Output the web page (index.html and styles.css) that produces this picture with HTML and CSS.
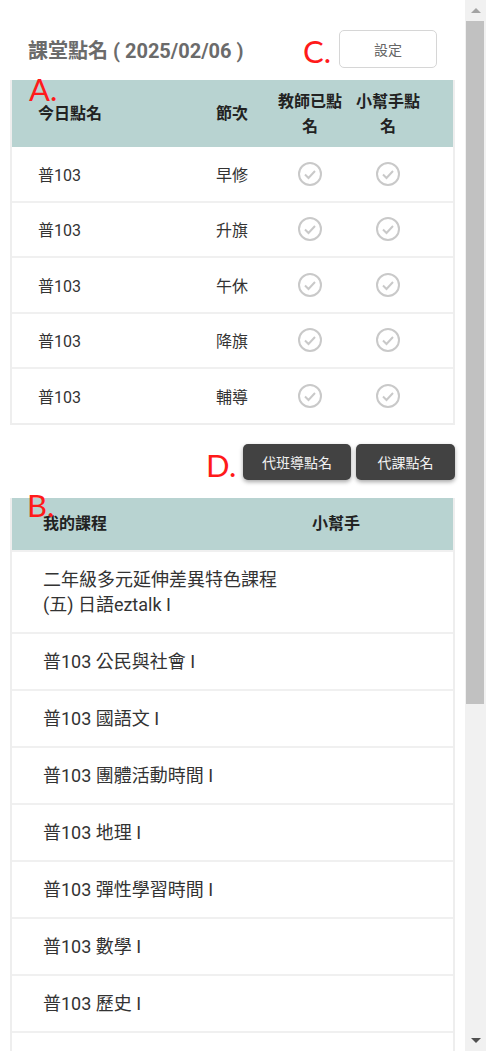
FILE: index.html
```html
<!DOCTYPE html>
<html lang="zh-Hant">
<head>
    <meta charset="UTF-8">
    <meta name="viewport" content="width=device-width, initial-scale=1.0">
    <title>課堂點名</title>
    <link rel="stylesheet" href="styles.css">
</head>
<body>

    <div class="page">
        <div class="top-bar">
            <h1 class="title">課堂點名 ( 2025/02/06 )</h1>
            <button class="setting-button">設定</button>
            <span class="mark mark-c">C.</span>
        </div>

        <div class="roll-table">
            <span class="mark mark-a">A.</span>
            <div class="roll-row roll-head">
                <div>今日點名</div>
                <div>節次</div>
                <div class="center">教師已點名</div>
                <div class="center">小幫手點名</div>
            </div>
            <div class="roll-row">
                <div>普103</div>
                <div>早修</div>
                <div class="center"><svg class="check" viewBox="0 0 24 24"><circle cx="12" cy="12" r="11"/><polyline points="7,12.5 10.5,16 17,9"/></svg></div>
                <div class="center"><svg class="check" viewBox="0 0 24 24"><circle cx="12" cy="12" r="11"/><polyline points="7,12.5 10.5,16 17,9"/></svg></div>
            </div>
            <div class="roll-row">
                <div>普103</div>
                <div>升旗</div>
                <div class="center"><svg class="check" viewBox="0 0 24 24"><circle cx="12" cy="12" r="11"/><polyline points="7,12.5 10.5,16 17,9"/></svg></div>
                <div class="center"><svg class="check" viewBox="0 0 24 24"><circle cx="12" cy="12" r="11"/><polyline points="7,12.5 10.5,16 17,9"/></svg></div>
            </div>
            <div class="roll-row">
                <div>普103</div>
                <div>午休</div>
                <div class="center"><svg class="check" viewBox="0 0 24 24"><circle cx="12" cy="12" r="11"/><polyline points="7,12.5 10.5,16 17,9"/></svg></div>
                <div class="center"><svg class="check" viewBox="0 0 24 24"><circle cx="12" cy="12" r="11"/><polyline points="7,12.5 10.5,16 17,9"/></svg></div>
            </div>
            <div class="roll-row">
                <div>普103</div>
                <div>降旗</div>
                <div class="center"><svg class="check" viewBox="0 0 24 24"><circle cx="12" cy="12" r="11"/><polyline points="7,12.5 10.5,16 17,9"/></svg></div>
                <div class="center"><svg class="check" viewBox="0 0 24 24"><circle cx="12" cy="12" r="11"/><polyline points="7,12.5 10.5,16 17,9"/></svg></div>
            </div>
            <div class="roll-row">
                <div>普103</div>
                <div>輔導</div>
                <div class="center"><svg class="check" viewBox="0 0 24 24"><circle cx="12" cy="12" r="11"/><polyline points="7,12.5 10.5,16 17,9"/></svg></div>
                <div class="center"><svg class="check" viewBox="0 0 24 24"><circle cx="12" cy="12" r="11"/><polyline points="7,12.5 10.5,16 17,9"/></svg></div>
            </div>
        </div>

        <div class="action-bar">
            <span class="mark mark-d">D.</span>
            <button class="dark-button">代班導點名</button>
            <button class="dark-button">代課點名</button>
        </div>

        <div class="course-table">
            <span class="mark mark-b">B.</span>
            <div class="course-row course-head">
                <div>我的課程</div>
                <div>小幫手</div>
            </div>
            <div class="course-row"><div>二年級多元延伸差異特色課程<br>(五) 日語eztalk I</div><div></div></div>
            <div class="course-row"><div>普103 公民與社會 I</div><div></div></div>
            <div class="course-row"><div>普103 國語文 I</div><div></div></div>
            <div class="course-row"><div>普103 團體活動時間 I</div><div></div></div>
            <div class="course-row"><div>普103 地理 I</div><div></div></div>
            <div class="course-row"><div>普103 彈性學習時間 I</div><div></div></div>
            <div class="course-row"><div>普103 數學 I</div><div></div></div>
            <div class="course-row"><div>普103 歷史 I</div><div></div></div>
            <div class="course-row"><div>普103 英語文 I</div><div></div></div>
            <div class="course-row"><div>普103 生物 I</div><div></div></div>
            <div class="course-row"><div>普103 化學 I</div><div></div></div>
            <div class="course-row"><div>普103 物理 I</div><div></div></div>
            <div class="course-row"><div>普103 體育 I</div><div></div></div>
            <div class="course-row"><div>普103 音樂 I</div><div></div></div>
            <div class="course-row"><div>普103 美術 I</div><div></div></div>
            <div class="course-row"><div>普103 健康與護理 I</div><div></div></div>
        </div>
    </div>

    <div class="scrollbar" aria-hidden="true">
        <div class="scroll-arrow arrow-up"></div>
        <div class="scroll-track"><div class="scroll-thumb"></div></div>
        <div class="scroll-arrow arrow-down"></div>
    </div>

</body>
</html>
```

FILE: styles.css
```css
body {
    margin: 0;
    padding-right: 21px;
    font-family: Roboto, "Noto Sans CJK TC", sans-serif;
    color: #333;
    background-color: white;
}

.page {
    padding: 30px 10px 20px;
}

.top-bar {
    position: relative;
    display: flex;
    justify-content: space-between;
    align-items: center;
    padding: 0 18px;
}

.title {
    margin: 0;
    font-size: 20px;
    font-weight: bold;
    color: #6b6b6b;
}

.setting-button {
    width: 98px;
    height: 38px;
    background: white;
    border: 1px solid #d6d6d6;
    border-radius: 5px;
    font-family: inherit;
    font-size: 14px;
    color: #666;
}

.mark {
    position: absolute;
    font-family: Lato, "Liberation Sans", sans-serif;
    font-size: 31px;
    line-height: 1;
    color: #ff1a1a;
}

.mark-c {
    left: 293px;
    top: 6px;
}

.mark-a {
    left: 17px;
    top: -6px;
}

.mark-d {
    left: 196px;
    top: 6px;
}

.mark-b {
    left: 15px;
    top: -8px;
}

.roll-table {
    position: relative;
    margin-top: 12px;
    border: 2px solid #eee;
    border-top: none;
}

.roll-row {
    display: grid;
    grid-template-columns: 1fr 55px 78px 78px;
    align-items: center;
    height: 53.5px;
    padding: 0 26px;
    border-bottom: 2px solid #f0f0f0;
    font-size: 16px;
}

.roll-row:last-child {
    border-bottom: none;
}

.roll-head {
    height: 67px;
    border-bottom: none;
    background-color: #b8d3d1;
    font-weight: bold;
    color: #222;
    line-height: 25px;
}

.center {
    text-align: center;
}

.check {
    display: block;
    width: 24px;
    height: 24px;
    margin: 0 auto;
    fill: none;
    stroke: #c9c9c9;
    stroke-width: 2;
    overflow: visible;
}

.action-bar {
    position: relative;
    display: flex;
    justify-content: flex-end;
    gap: 5px;
    margin: 19px 0 18px;
}

.dark-button {
    min-width: 99px;
    height: 36px;
    padding: 0 19px;
    background-color: #424242;
    color: #f2f2f2;
    border: none;
    border-radius: 5px;
    box-shadow: 0 2px 4px rgba(0, 0, 0, 0.35);
    font-family: inherit;
    font-size: 14px;
}

.course-table {
    position: relative;
    border: 2px solid #eee;
    border-top: none;
}

.course-row {
    display: grid;
    grid-template-columns: 269px 1fr;
    align-items: center;
    padding: 15px 31px;
    line-height: 25px;
    font-size: 18px;
    border-bottom: 2px solid #f0f0f0;
}

.course-head {
    height: 54px;
    box-sizing: border-box;
    padding: 0 31px;
    background-color: #b8d3d1;
    font-size: 16px;
    font-weight: bold;
    color: #222;
}

.scrollbar {
    position: fixed;
    top: 0;
    right: 0;
    width: 21px;
    height: 100vh;
    display: flex;
    flex-direction: column;
    background-color: #f1f1f1;
}

.scroll-arrow {
    height: 21px;
    display: flex;
    justify-content: center;
    align-items: center;
}

.scroll-arrow::before {
    content: "";
    border-left: 5px solid transparent;
    border-right: 5px solid transparent;
}

.arrow-up::before {
    border-bottom: 5px solid #a3a3a3;
    margin-top: -1px;
}

.arrow-down::before {
    border-top: 5px solid #505050;
}

.scroll-track {
    flex: 1;
}

.scroll-thumb {
    height: 683px;
    margin: 0 2px 0 1px;
    background-color: #c1c1c1;
}
```
